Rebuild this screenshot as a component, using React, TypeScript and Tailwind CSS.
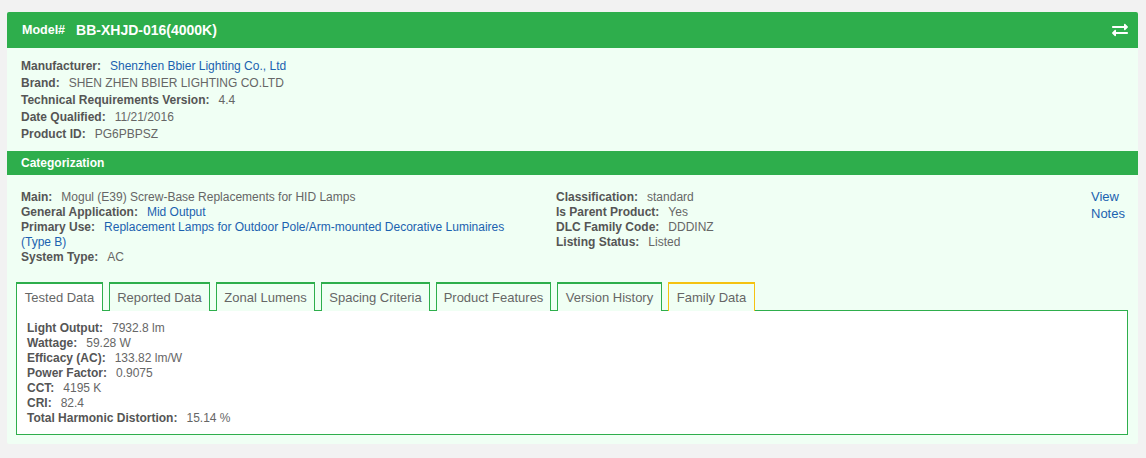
import { FaExchangeAlt } from "react-icons/fa";

type Row = { label: string; value: string; link?: boolean };

const details: Row[] = [
  { label: "Manufacturer:", value: "Shenzhen Bbier Lighting Co., Ltd", link: true },
  { label: "Brand:", value: "SHEN ZHEN BBIER LIGHTING CO.LTD" },
  { label: "Technical Requirements Version:", value: "4.4" },
  { label: "Date Qualified:", value: "11/21/2016" },
  { label: "Product ID:", value: "PG6PBPSZ" },
];

const categoryLeft: Row[] = [
  { label: "Main:", value: "Mogul (E39) Screw-Base Replacements for HID Lamps" },
  { label: "General Application:", value: "Mid Output", link: true },
  {
    label: "Primary Use:",
    value: "Replacement Lamps for Outdoor Pole/Arm-mounted Decorative Luminaires (Type B)",
    link: true,
  },
  { label: "System Type:", value: "AC" },
];

const categoryRight: Row[] = [
  { label: "Classification:", value: "standard" },
  { label: "Is Parent Product:", value: "Yes" },
  { label: "DLC Family Code:", value: "DDDINZ" },
  { label: "Listing Status:", value: "Listed" },
];

const tested: Row[] = [
  { label: "Light Output:", value: "7932.8 lm" },
  { label: "Wattage:", value: "59.28 W" },
  { label: "Efficacy (AC):", value: "133.82 lm/W" },
  { label: "Power Factor:", value: "0.9075" },
  { label: "CCT:", value: "4195 K" },
  { label: "CRI:", value: "82.4" },
  { label: "Total Harmonic Distortion:", value: "15.14 %" },
];

const tabs = [
  { name: "Tested Data", w: "w-[87px]", active: true },
  { name: "Reported Data", w: "w-[101px]" },
  { name: "Zonal Lumens", w: "w-[99px]" },
  { name: "Spacing Criteria", w: "w-[109px]" },
  { name: "Product Features", w: "w-[115px]" },
  { name: "Version History", w: "w-[105px]" },
  { name: "Family Data", w: "w-[87px]", family: true },
];

function Field({ row }: { row: Row }) {
  return (
    <div>
      <span className="font-bold text-[#555]">{row.label}</span>
      <span className={`ml-[9px] ${row.link ? "text-[#1b62b0]" : "text-[#666]"}`}>
        {row.value}
      </span>
    </div>
  );
}

export default function App() {
  return (
    <div
      className="min-h-[458px] bg-[#f2f2f2] pt-[12px] pl-[7px] pr-[8px] pb-[13px]"
      style={{ fontFamily: '"Liberation Sans", Arial, sans-serif' }}
    >
      <div className="overflow-hidden rounded-[2px] bg-[#f0fff4]">
        <div className="flex h-[36px] items-center bg-[#2eae4c] pl-[15px] pr-[10px] text-white">
          <span className="text-[12.5px] font-bold">Model#</span>
          <span className="ml-[11px] text-[14px] font-bold">BB-XHJD-016(4000K)</span>
          <FaExchangeAlt className="ml-auto text-[16px]" />
        </div>

        <div className="pt-[10px] pb-[8px] pl-[14px] text-[12px] leading-[17px]">
          {details.map((r) => (
            <Field key={r.label} row={r} />
          ))}
        </div>

        <div className="flex h-[24px] items-center bg-[#2eae4c] pl-[14px] text-[12px] font-bold text-white">
          Categorization
        </div>

        <div className="flex pt-[15px] pl-[14px] pr-[7px] text-[12px] leading-[15px]">
          <div className="w-[500px]">
            {categoryLeft.map((r) => (
              <Field key={r.label} row={r} />
            ))}
          </div>
          <div className="ml-[35px] flex-1">
            {categoryRight.map((r) => (
              <Field key={r.label} row={r} />
            ))}
          </div>
          <a className="-mt-[2px] w-[40px] text-[13px] leading-[17px] text-[#1b62b0]">View Notes</a>
        </div>

        <div className="pt-[17px] pl-[9px] pr-[10px] pb-[9px]">
          <div className="flex gap-[6px]">
            {tabs.map((t) => (
              <div
                key={t.name}
                className={`${t.w} relative -mb-px flex h-[29px] items-center justify-center border-x border-t-2 text-[13px] text-[#666] ${
                  t.family ? "border-[#f5c211]" : "border-[#2eae4c]"
                } ${t.active ? "z-10 bg-white" : "bg-[#f0fff4]"}`}
              >
                {t.name}
              </div>
            ))}
          </div>
          <div className="h-[125px] border border-[#2eae4c] bg-white pt-[10px] pl-[10px] text-[12px] leading-[15px]">
            {tested.map((r) => (
              <Field key={r.label} row={r} />
            ))}
          </div>
        </div>
      </div>
    </div>
  );
}
